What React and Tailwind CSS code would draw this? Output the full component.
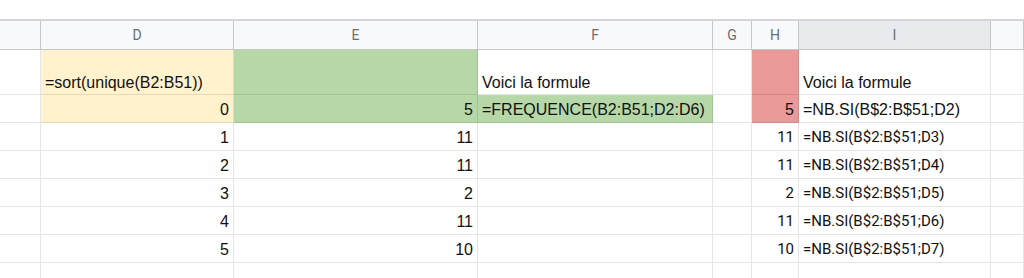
const COLS = [
  { key: 'C', w: 'w-[41px]' },
  { key: 'D', w: 'w-[193px]' },
  { key: 'E', w: 'w-[244px]' },
  { key: 'F', w: 'w-[235px]' },
  { key: 'G', w: 'w-[39px]' },
  { key: 'H', w: 'w-[47px]' },
  { key: 'I', w: 'w-[192px]' },
  { key: 'J', w: 'flex-1' },
];

const BG = {
  yellow: 'bg-[#fff2cc]',
  green: 'bg-[#b6d7a8]',
  red: 'bg-[#ea9999]',
};

// each row: { h, cells: { D: {text, right, bg, roboto} } }
const rows = [
  {
    h: 'h-[45px]',
    tall: true,
    cells: {
      D: { text: '=sort(unique(B2:B51))', bg: 'yellow' },
      E: { bg: 'green' },
      F: { text: 'Voici la formule' },
      H: { bg: 'red' },
      I: { text: 'Voici la formule' },
    },
  },
  {
    h: 'h-[28px]',
    cells: {
      D: { text: '0', right: true, bg: 'yellow' },
      E: { text: '5', right: true, bg: 'green' },
      F: { text: '=FREQUENCE(B2:B51;D2:D6)', bg: 'green' },
      H: { text: '5', right: true, bg: 'red' },
      I: { text: '=NB.SI(B$2:B$51;D2)' },
    },
  },
  ...[
    ['1', '11', '11', 'D3'],
    ['2', '11', '11', 'D4'],
    ['3', '2', '2', 'D5'],
    ['4', '11', '11', 'D6'],
    ['5', '10', '10', 'D7'],
  ].map(([d, e, h, ref]) => ({
    h: 'h-[28px]',
    cells: {
      D: { text: d, right: true },
      E: { text: e, right: true },
      H: { text: h, right: true, roboto: true },
      I: { text: `=NB.SI(B$2:B$51;${ref})`, roboto: true },
    },
  })),
  { h: 'h-[28px]', cells: {} },
];

function Cell({ col, cell, tall }) {
  const c = cell || {};
  return (
    <div
      className={`${col.w} shrink-0 flex px-[4px] border-r border-b border-black/10 overflow-hidden whitespace-nowrap ${
        c.bg ? BG[c.bg] : 'bg-white'
      } ${tall ? 'items-end pb-[1px] leading-[20px]' : 'items-center pt-[2px]'} ${
        c.right ? 'justify-end' : 'justify-start'
      } ${c.roboto ? "font-['Roboto',sans-serif] text-[15px]" : ''}`}
    >
      {c.text}
    </div>
  );
}

export default function App() {
  return (
    <div className="w-[1024px] h-[278px] overflow-hidden bg-white text-[16px] text-[#111] font-['Liberation_Sans',Arial,sans-serif]">
      <div className="h-[19px]" />
      {/* column headers */}
      <div className="flex h-[31px] border-t-2 border-[#d3d5d8] bg-[#f8f9fa] text-[14px] text-[#6b6e72] font-['Roboto',sans-serif]">
        {COLS.map((col) => (
          <div
            key={col.key}
            className={`${col.w} shrink-0 flex items-center justify-center border-r border-b border-[#c4c7c5] ${
              col.key === 'I' ? 'bg-[#e8eaed]' : ''
            }`}
          >
            {col.key === 'C' || col.key === 'J' ? '' : col.key}
          </div>
        ))}
      </div>
      {rows.map((row, i) => (
        <div key={i} className={`flex ${row.h}`}>
          {COLS.map((col) => (
            <Cell key={col.key} col={col} cell={row.cells[col.key]} tall={row.tall} />
          ))}
        </div>
      ))}
    </div>
  );
}
